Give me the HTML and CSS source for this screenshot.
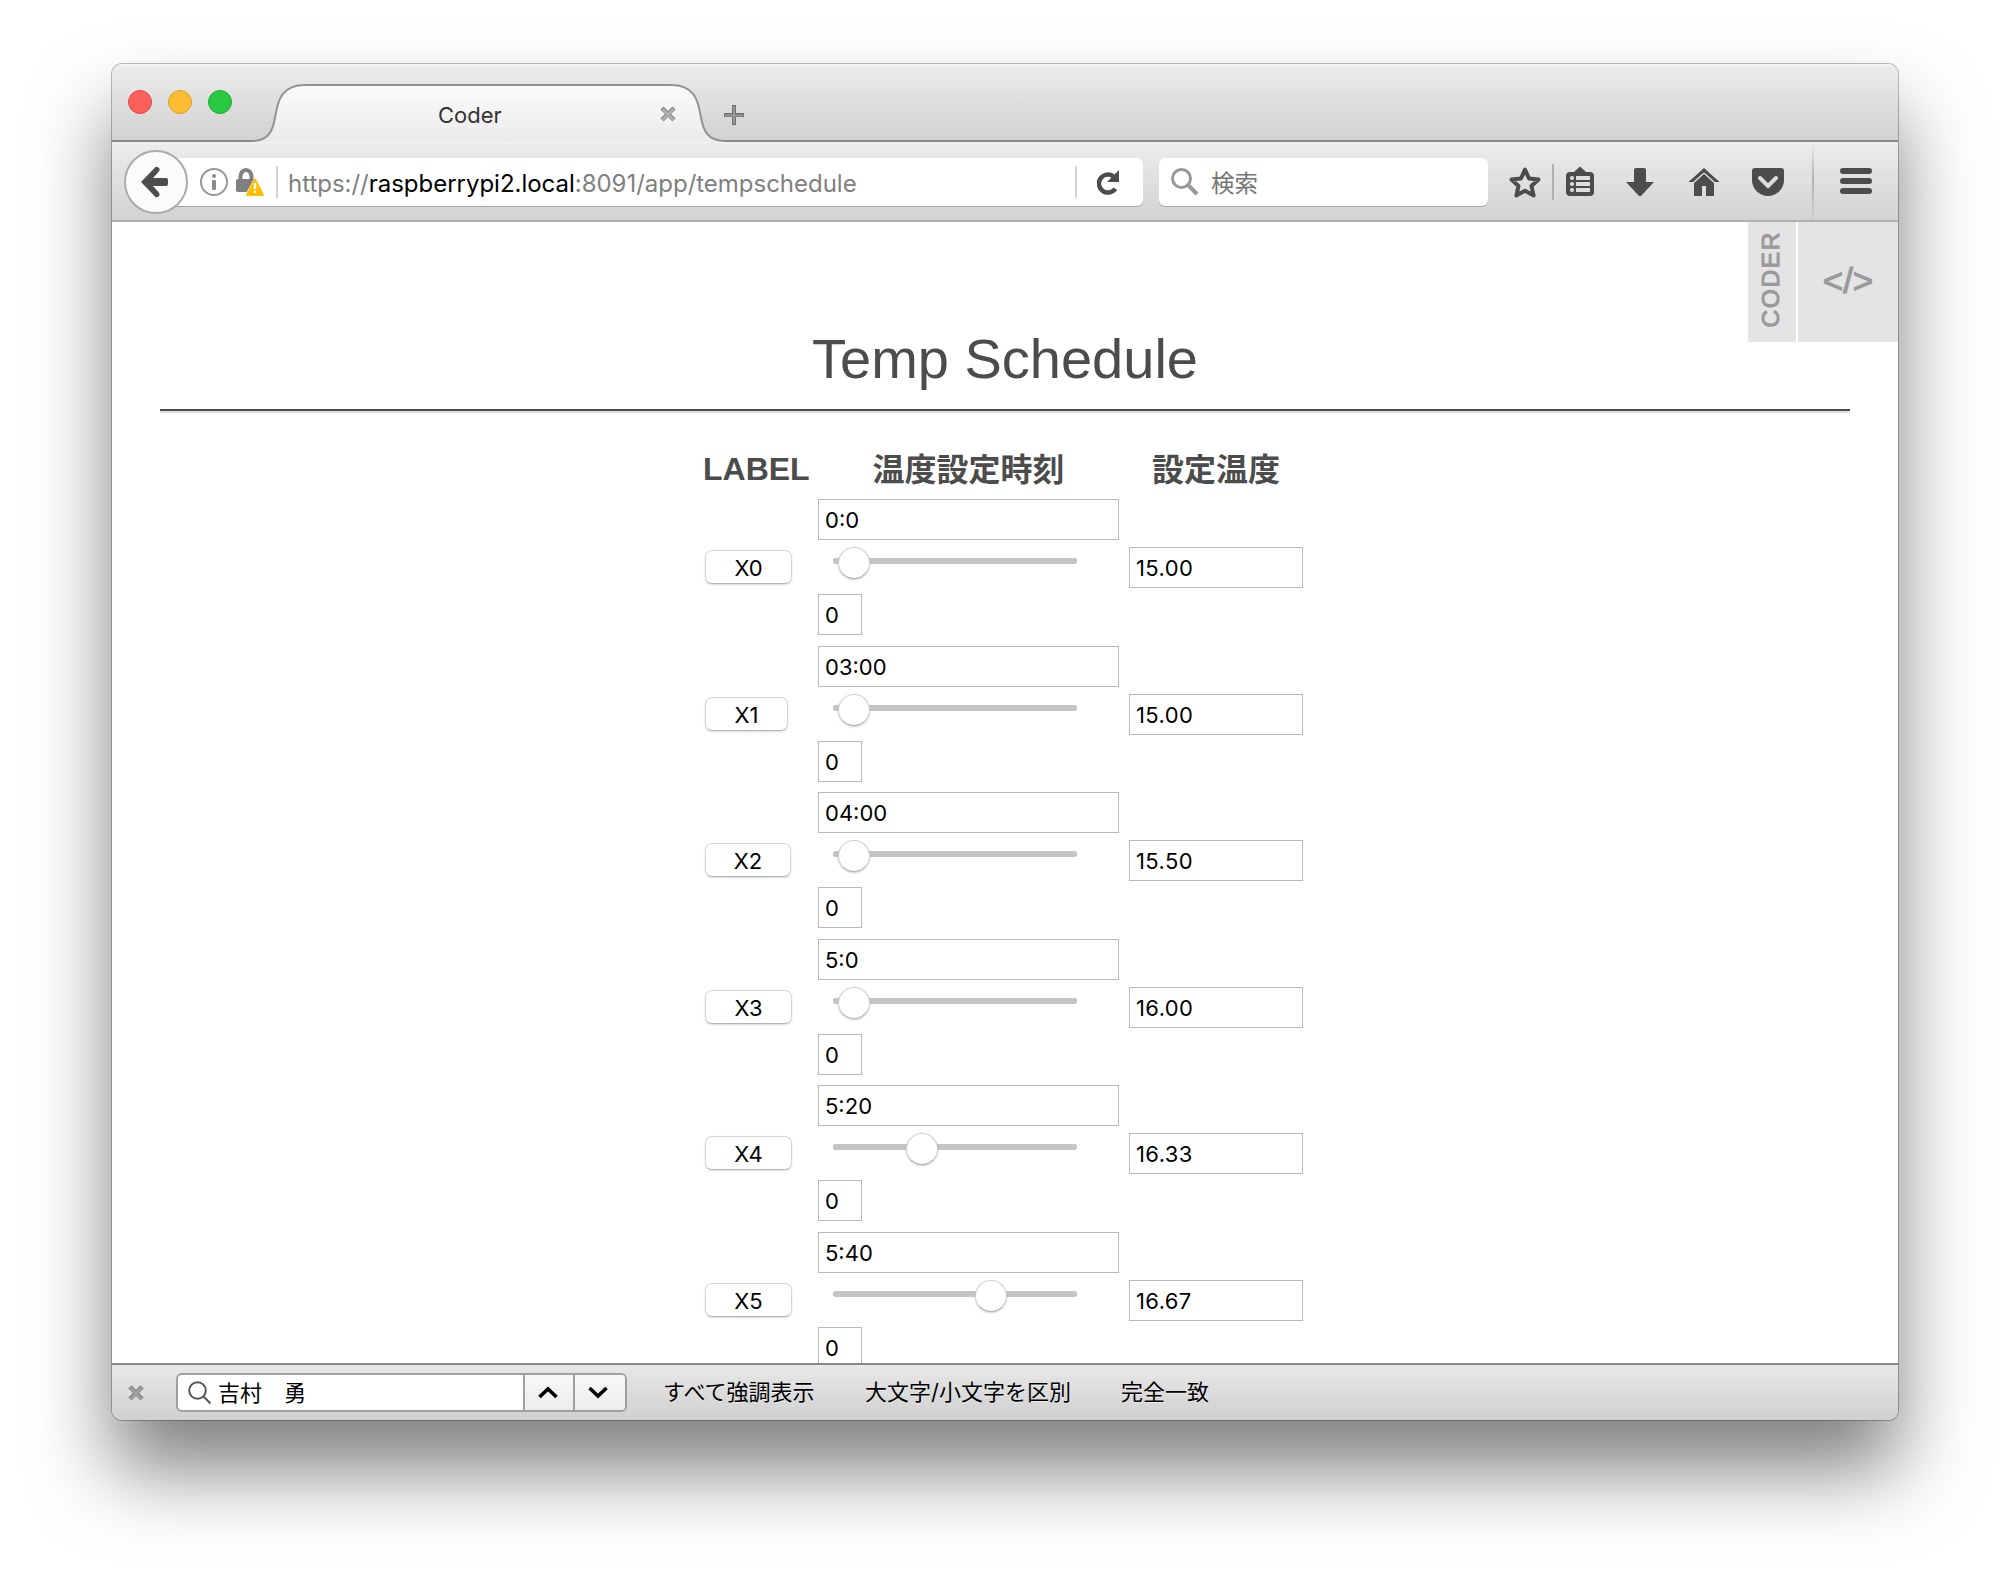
FILE: index.html
```html
<!DOCTYPE html>
<html lang="ja">
<head>
<meta charset="utf-8">
<title>Coder</title>
<link rel="stylesheet" href="styles.css">
</head>
<body>
<div class="window">
  <header class="tabstrip">
    <div class="lights"><i class="red"></i><i class="yellow"></i><i class="green"></i></div>
    <div class="tab">
      <svg class="tab-shape" width="474" height="78" viewBox="251 64 474 78">
        <defs><linearGradient id="tabfill" x1="0" y1="84" x2="0" y2="142" gradientUnits="userSpaceOnUse"><stop offset="0" stop-color="#fcfcfc"/><stop offset="1" stop-color="#ebebeb"/></linearGradient></defs>
        <path d="M251 142V141C270 141 273 130 275.500 115C278 100 282 85 305 85H671C694 85 698 100 700.500 115C703 130 707 141 725 141V142Z" fill="url(#tabfill)"/>
        <path d="M251 141C270 141 273 130 275.500 115C278 100 282 85 305 85H671C694 85 698 100 700.500 115C703 130 707 141 725 141" fill="none" stroke="#929292" stroke-width="2"/>
      </svg>
      <span class="tab-title">Coder</span>
      <svg class="tab-close" width="16" height="16" viewBox="0 0 16 16"><path d="M2 2L14 14M14 2L2 14" stroke="#888" stroke-width="4.500"/><path d="M2.500 3L13.500 14M13.500 3L2.500 14" stroke="#b0b0b0" stroke-width="2.500"/></svg>
    </div>
    <svg class="newtab" width="20" height="20" viewBox="0 0 20 20"><path d="M10 0V20M0 10H20" stroke="#707070" stroke-width="4"/><path d="M10 1V19M1 10.500H19" stroke="#989898" stroke-width="2"/></svg>
  </header>
  <nav class="toolbar">
    <div class="back"><svg width="28" height="32" viewBox="0 0 28 32"><path d="M1 16L15.500 1Q17.500 0 19.500 2.500Q20 4.500 18.500 6L13 12H26Q28 12 28 14V18Q28 20 26 20H13L18.500 26Q20 27.500 19.500 29.500Q17.500 32 15.500 31Z" fill="#4c4c4c"/></svg></div>
    <div class="urlbar">
      <svg class="info" width="28" height="28" viewBox="0 0 28 28"><circle cx="14" cy="14" r="13" fill="none" stroke="#999" stroke-width="2"/><circle cx="14" cy="8" r="2" fill="#8c8c8c"/><rect x="12" y="12" width="4" height="10" rx="1" fill="#8c8c8c"/></svg>
      <svg class="lock" width="28" height="29" viewBox="0 0 28 29"><path d="M4.500 12V8.500A5.500 6.500 0 0 1 15.500 8.500V12" fill="none" stroke="#808080" stroke-width="4"/><rect x="0" y="11" width="20" height="13" rx="2" fill="#808080"/><path d="M19 9L29 29H8Z" fill="#fff"/><path d="M19 11.500L27 27H11Z" fill="#ffbf00" stroke="#ffbf00" stroke-width="2" stroke-linejoin="round"/><path d="M19 15V21M19 22.800V25" stroke="#fff" stroke-width="2.400"/></svg>
      <i class="divider"></i>
      <span class="url">https://<b>raspberrypi2.local</b>:8091/app/tempschedule</span>
      <i class="divider"></i>
      <svg class="reload" width="23" height="25" viewBox="0 0 23 25"><path d="M18.300 18.700A9 9 0 1 1 16.500 6.500" fill="none" stroke="#4c4c4c" stroke-width="4.500"/><path d="M22 0V12H10Z" fill="#4c4c4c"/></svg>
    </div>
    <div class="search"><svg width="28" height="28" viewBox="0 0 28 28"><circle cx="10.500" cy="10.500" r="9" fill="none" stroke="#999" stroke-width="3"/><path d="M17 17L26 26" stroke="#999" stroke-width="4"/></svg><span>検索</span></div>
    <svg class="actions" width="410" height="78" viewBox="1488 142 410 78">
      <defs><linearGradient id="sep" x1="0" y1="0" x2="0" y2="1"><stop offset="0" stop-color="#b0b0b0" stop-opacity="0"/><stop offset=".5" stop-color="#b0b0b0"/><stop offset="1" stop-color="#b0b0b0" stop-opacity=".2"/></linearGradient></defs>
      <g fill="#4c4c4c">
        <path d="M1525 169.500L1529 178.500L1538.500 179.600L1531.500 186L1533.600 195.500L1525 190.800L1516.400 195.500L1518.500 186L1511.500 179.600L1521 178.500Z" fill="none" stroke="#4c4c4c" stroke-width="4" stroke-linejoin="round"/>
        <rect x="1552" y="164" width="2" height="36" fill="#b0b0b0"/>
        <path d="M1574 172L1580 166.500L1586 172H1590Q1594 172 1594 176V192Q1594 196 1590 196H1570Q1566 196 1566 192V176Q1566 172 1570 172Z"/>
        <path d="M1576 176H1590V180H1576ZM1576 182H1590V186H1576ZM1576 188H1590V192H1576Z" fill="#dedede"/>
        <circle cx="1572" cy="178" r="2" fill="#dedede"/><circle cx="1572" cy="184" r="2" fill="#dedede"/><circle cx="1572" cy="190" r="2" fill="#dedede"/>
        <path d="M1636 168H1644Q1646 168 1646 170V182H1654L1641.500 195.500Q1640 196.500 1638.500 195.500L1626 182H1634V170Q1634 168 1636 168Z"/>
        <path d="M1688.500 182L1704 168L1719.500 182H1715L1704 172.300L1693 182Z"/>
        <path d="M1704 174L1714 183V196H1706V186H1702V196H1694V183Z"/>
        <path d="M1755 168H1781Q1784 168 1784 171V180A16 16 0 0 1 1752 180V171Q1752 168 1755 168Z"/>
        <path d="M1760 178L1768 186L1776 178" fill="none" stroke="#dedede" stroke-width="4" stroke-linecap="round"/>
        <rect x="1812" y="142" width="2" height="78" fill="url(#sep)"/>
        <rect x="1840" y="168" width="32" height="6" rx="3"/><rect x="1840" y="178" width="32" height="6" rx="3"/><rect x="1840" y="188" width="32" height="6" rx="3"/>
      </g>
    </svg>
  </nav>
  <main class="page">
    <aside class="coder"><div class="coder-name"><span>CODER</span></div><div class="coder-code">&lt;/&gt;</div></aside>
    <h1>Temp Schedule</h1>
    <div class="rule"></div>
    <div class="row head"><span class="latin">LABEL</span><span>温度設定時刻</span><span>設定温度</span></div>
    <div class="row"><div class="btn">X0</div><div class="time"><div class="field">0:0</div><div class="slider"><i style="margin-left:5px"></i></div><div class="field small">0</div></div><div class="field temp">15.00</div></div>
    <div class="row"><div class="btn x1">X1</div><div class="time"><div class="field">03:00</div><div class="slider"><i style="margin-left:5px"></i></div><div class="field small">0</div></div><div class="field temp">15.00</div></div>
    <div class="row"><div class="btn x2">X2</div><div class="time"><div class="field">04:00</div><div class="slider"><i style="margin-left:5px"></i></div><div class="field small">0</div></div><div class="field temp">15.50</div></div>
    <div class="row"><div class="btn">X3</div><div class="time"><div class="field">5:0</div><div class="slider"><i style="margin-left:5px"></i></div><div class="field small">0</div></div><div class="field temp">16.00</div></div>
    <div class="row"><div class="btn">X4</div><div class="time"><div class="field">5:20</div><div class="slider"><i style="margin-left:73px"></i></div><div class="field small">0</div></div><div class="field temp">16.33</div></div>
    <div class="row"><div class="btn">X5</div><div class="time"><div class="field">5:40</div><div class="slider"><i style="margin-left:142px"></i></div><div class="field small">0</div></div><div class="field temp">16.67</div></div>
  </main>
  <footer class="findbar">
    <svg class="find-close" width="16" height="16" viewBox="0 0 16 16"><path d="M2 2L14 14M14 2L2 14" stroke="#808080" stroke-width="4.500"/><path d="M2.500 3L13.500 14M13.500 3L2.500 14" stroke="#a0a0a0" stroke-width="2.500"/></svg>
    <div class="find-group">
      <div class="find-input"><svg width="24" height="24" viewBox="0 0 24 24"><circle cx="9.500" cy="9.500" r="8.300" fill="none" stroke="#555" stroke-width="2"/><path d="M15.500 15.500L22.500 22.500" stroke="#555" stroke-width="2"/></svg><span>吉村　勇</span></div>
      <div class="find-step"><svg width="20" height="13" viewBox="0 0 20 13"><path d="M1.500 11L10 3L18.500 11" fill="none" stroke="#000" stroke-width="3.600"/></svg></div>
      <div class="find-step"><svg width="20" height="13" viewBox="0 0 20 13"><path d="M1.500 2L10 10L18.500 2" fill="none" stroke="#000" stroke-width="3.600"/></svg></div>
    </div>
    <span class="opt all">すべて強調表示</span><span class="opt case">大文字/小文字を区別</span><span class="opt">完全一致</span>
  </footer>
</div>
</body>
</html>
```
FILE: styles.css
```css
* { box-sizing: border-box; }
body {
  margin: 0; height: 1580px; padding: 64px 0 0 112px; overflow: hidden;
  background: #fff; font-family: Inter, "Noto Sans CJK JP", sans-serif; font-size: 22px; color: #000;
}
svg { display: block; flex: none; }
.window {
  width: 1786px; height: 1356px; display: flex; flex-direction: column;
  border-radius: 10px; overflow: hidden; background: #fff;
  box-shadow: 0 0 0 1px rgba(0,0,0,.26), 0 50px 80px rgba(0,0,0,.5);
}
.tabstrip {
  height: 78px; flex: none; display: flex; align-items: flex-start;
  background: linear-gradient(#888, #888) 0 100% / 100% 2px no-repeat, linear-gradient(#f6f6f6 0, #ebebeb 3px, #d1d1d1);
}
.lights { width: 139px; display: flex; gap: 16px; padding: 26px 0 0 16px; }
.lights i { width: 24px; height: 24px; border-radius: 50%; border-width: 1px; border-style: solid; flex: none; }
.lights .red { background: #fc605b; border-color: #de4643; }
.lights .yellow { background: #fdbc32; border-color: #de9f28; }
.lights .green { background: #29ca41; border-color: #1fad30; }
.tab { width: 474px; height: 78px; display: grid; grid-template-columns: 409px 16px 1fr; align-items: center; }
.tab-shape { grid-area: 1 / 1 / 2 / 4; }
.tab-title { grid-area: 1 / 1; justify-self: start; padding-left: 187px; margin-top: 24px; line-height: 28px; color: #333; }
.tab-close { grid-area: 1 / 2; margin-top: 22px; }
.newtab { margin: 41px 0 0 -1px; }
.toolbar {
  height: 80px; flex: none; display: flex; align-items: flex-start; border-bottom: 2px solid #b0b0b0;
  background: linear-gradient(#f3f3f3 0, #ebebeb 3px, #d3d3d3);
}
.back {
  width: 64px; height: 64px; margin: 8px -32px 0 12px; z-index: 1; flex: none; border-radius: 50%;
  border: 2px solid #aaa; background: #fbfbfb; display: flex; align-items: center; padding-left: 14px;
}
.urlbar, .search { height: 48px; margin-top: 16px; background: #fff; display: flex; align-items: center; box-shadow: 0 1px 0 #a6a6a6; }
.urlbar { width: 987px; border-radius: 0 6px 6px 0; padding-left: 44px; }
.lock { margin: 0 0 0 8px; }
.divider { width: 2px; height: 32px; background: #d2d2d2; flex: none; }
.lock + .divider { margin-left: 12px; }
.url { width: 797px; padding: 2px 0 0 10px; color: #808080; white-space: nowrap; font-size: 24px; letter-spacing: -.02px; }
.url b { font-weight: 400; color: #000; }
.reload { margin-left: 20px; }
.search { width: 329px; margin-left: 16px; border-radius: 6px; padding-left: 12px; gap: 12px; color: #757575; font-size: 23.500px; }
.page { flex: none; height: 1141px; overflow: hidden; color: #4c4c4c; }
.coder { height: 120px; display: flex; justify-content: flex-end; gap: 2px; color: #999; font-family: "Liberation Sans", sans-serif; -webkit-text-stroke: 1px #999; }
.coder-name, .coder-code { background: #e4e4e4; display: flex; align-items: center; justify-content: center; }
.coder-name { width: 48px; }
.coder-name span { writing-mode: vertical-rl; transform: rotate(180deg); font-size: 24.500px; line-height: 30px; margin: -5px 2px 0 0; letter-spacing: 1.6px; }
.coder-code { width: 100px; font-size: 35px; padding-bottom: 2px; }
h1 { margin: -15px 0 0; height: 66px; text-align: center; font: 400 56px/64px "Liberation Sans", sans-serif; }
.rule { height: 4px; margin: 16px 48px 0; background: #4c4c4c; border-bottom: 2px solid #ddd; }
.row { height: 146.500px; display: grid; grid-template-columns: 113px 311px 174px; padding-left: 593px; align-items: start; color: #000; }
.head { height: 86px; padding-top: 30px; color: #4c4c4c; font-weight: 700; font-size: 32px; line-height: 48px; font-family: "Noto Sans CJK JP", sans-serif; }
.head span:nth-child(2) { text-align: center; padding-right: 10px; }
.head span:nth-child(3) { text-align: center; }
.head .latin { font-family: "Liberation Sans", sans-serif; margin: 2px 0 0 -2px; }
.btn {
  width: 87px; height: 34px; margin-top: 51px; border-radius: 7px; border: 1px solid #d5d5d5; border-bottom-color: #b5b5b5;
  box-shadow: 0 1px 2px rgba(0,0,0,.15); text-align: center; line-height: 34px;
}
.x1 { width: 83px; }
.x2 { width: 86px; }
.time { display: flex; flex-direction: column; }
.field { width: 301px; height: 41px; border: 1px solid #b9b9b9; padding-left: 6px; line-height: 41px; background: #fff; }
.small { width: 44px; }
.temp { width: 174px; margin-top: 48px; padding-left: 6px; letter-spacing: .4px; }
.slider { height: 54px; width: 244px; margin-left: 15px; padding-top: 7px; background: linear-gradient(#c5c5c5, #c5c5c5) 3px 18px / 238px 6px no-repeat, radial-gradient(circle at 3px 3px, #c5c5c5 3px, transparent 3.500px) 0 18px / 6px 6px no-repeat, radial-gradient(circle at 3px 3px, #c5c5c5 3px, transparent 3.500px) 238px 18px / 6px 6px no-repeat; }
.slider i { display: block; width: 32px; height: 32px; border-radius: 50%; background: #fff; border: 1px solid #cfcfcf; border-bottom-color: #b5b5b5; box-shadow: 0 1px 2px rgba(0,0,0,.2); }
.findbar {
  flex: 1; display: flex; align-items: flex-start; border-top: 2px solid #888;
  background: linear-gradient(#e8e8e8, #d0d0d0);
}
.find-close { margin: 20px 0 0 16px; }
.find-group { display: flex; width: 451px; height: 39px; margin: 8px 0 0 32px; border: 2px solid #a0a0a0; border-radius: 6px; background: #fff; overflow: hidden; }
.find-input { width: 345px; display: flex; gap: 6px; padding: 6px 0 0 10px; line-height: 24px; }
.find-step { width: 50px; border-left: 2px solid #a0a0a0; background: linear-gradient(#f8f8f8, #ececec); display: flex; align-items: center; padding-left: 13px; }
.find-step:last-child { width: 52px; }
.opt { line-height: 32px; margin-top: 11px; white-space: nowrap; text-shadow: 0 1px 0 rgba(255,255,255,.5); }
.all { margin-left: 36px; width: 202px; }
.case { width: 256px; }
```
